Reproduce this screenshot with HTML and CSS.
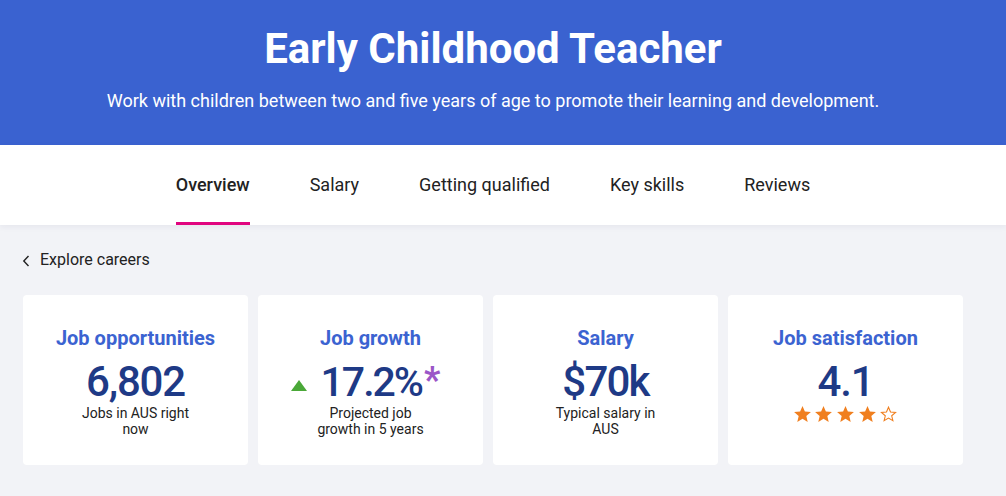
FILE: index.html
```html
<!DOCTYPE html>
<html lang="en">
<head>
<meta charset="utf-8">
<title>Early Childhood Teacher</title>
<link rel="stylesheet" href="styles.css">
</head>
<body>
<header class="hero">
  <h1 class="hero-title">Early Childhood Teacher</h1>
  <p class="hero-sub">Work with children between two and five years of age to promote their learning and development.</p>
</header>
<nav class="tabs">
  <a class="tab active">Overview</a>
  <a class="tab">Salary</a>
  <a class="tab">Getting qualified</a>
  <a class="tab">Key skills</a>
  <a class="tab">Reviews</a>
</nav>
<main class="content">
  <a class="back">
    <svg class="chev" width="8" height="12" viewBox="0 0 8 12"><path d="M6.5 1 L1.8 6 L6.5 11" fill="none" stroke="#222" stroke-width="1.4"/></svg>
    <span>Explore careers</span>
  </a>
  <section class="cards">
    <div class="card">
      <div class="card-title">Job opportunities</div>
      <div class="card-value">6,802</div>
      <div class="card-caption">Jobs in AUS right now</div>
    </div>
    <div class="card">
      <div class="card-title">Job growth</div>
      <div class="card-value card-value-growth"><svg class="tri" width="16" height="11" viewBox="0 0 16 11"><path d="M8 0 L16 11 L0 11 Z" fill="#4aa838"/></svg>17.2%<span class="ast">*</span></div>
      <div class="card-caption">Projected job growth in 5 years</div>
    </div>
    <div class="card">
      <div class="card-title">Salary</div>
      <div class="card-value card-value-salary">$70k</div>
      <div class="card-caption">Typical salary in AUS</div>
    </div>
    <div class="card">
      <div class="card-title">Job satisfaction</div>
      <div class="card-value">4.1</div>
      <div class="stars">
        <svg width="17" height="16" viewBox="2 2 20 19"><path d="M12 17.27L18.18 21l-1.64-7.03L22 9.24l-7.19-.61L12 2 9.19 8.63 2 9.24l5.46 4.73L5.82 21z" fill="#f07f1f"/></svg>
        <svg width="17" height="16" viewBox="2 2 20 19"><path d="M12 17.27L18.18 21l-1.64-7.03L22 9.24l-7.19-.61L12 2 9.19 8.63 2 9.24l5.46 4.73L5.82 21z" fill="#f07f1f"/></svg>
        <svg width="17" height="16" viewBox="2 2 20 19"><path d="M12 17.27L18.18 21l-1.64-7.03L22 9.24l-7.19-.61L12 2 9.19 8.63 2 9.24l5.46 4.73L5.82 21z" fill="#f07f1f"/></svg>
        <svg width="17" height="16" viewBox="2 2 20 19"><path d="M12 17.27L18.18 21l-1.64-7.03L22 9.24l-7.19-.61L12 2 9.19 8.63 2 9.24l5.46 4.73L5.82 21z" fill="#f07f1f"/></svg>
        <svg width="17" height="16" viewBox="2 2 20 19"><path d="M12 3.4L14.4 9.1 20.4 9.6 15.8 13.6 17.2 19.4 12 16.3 6.8 19.4 8.2 13.6 3.6 9.6 9.6 9.1Z" fill="none" stroke="#f07f1f" stroke-width="1.3" stroke-linejoin="miter"/></svg>
      </div>
    </div>
  </section>
</main>
</body>
</html>
```
FILE: styles.css
```css
* { box-sizing: border-box; }
html, body { margin: 0; padding: 0; }
body {
  font-family: Roboto, "Liberation Sans", Arial, sans-serif;
  background: #f2f3f7;
  color: #222;
  width: 1006px;
  height: 496px;
  overflow: hidden;
}
.hero {
  background: #3a62d0;
  color: #fff;
  height: 145px;
  padding: 25px 20px 0 0;
  text-align: center;
}
.hero-title {
  margin: 0;
  font-size: 42px;
  line-height: 48px;
  font-weight: 700;
}
.hero-sub {
  margin: 16px 0 0;
  font-size: 18px;
  line-height: 24px;
  font-weight: 400;
}
.tabs {
  background: #fff;
  height: 80px;
  display: flex;
  justify-content: center;
  gap: 60px;
  padding-right: 20px;
  box-shadow: 0 2px 6px rgba(30, 40, 80, 0.06);
  position: relative;
}
.tab {
  padding-top: 29px;
  font-size: 18px;
  line-height: 22px;
  color: #222;
  border-bottom: 3px solid transparent;
}
.tab.active {
  font-weight: 500;
  border-bottom-color: #e0047f;
}
.content {
  padding: 25px 0 0 22px;
}
.back {
  display: flex;
  align-items: center;
  gap: 10px;
  font-size: 16px;
  line-height: 20px;
  color: #222;
}
.chev { display: block; margin-top: 1px; }
.cards {
  margin-top: 25px;
  margin-left: 1px;
  display: grid;
  grid-template-columns: 225px 225px 225px 235px;
  gap: 10px;
}
.card {
  background: #fff;
  border-radius: 4px;
  height: 170px;
  padding-top: 31px;
  text-align: center;
}
.card-title {
  font-size: 20px;
  line-height: 24px;
  font-weight: 700;
  color: #3b63d1;
}
.card-value {
  margin-top: 10px;
  font-size: 42px;
  line-height: 44px;
  font-weight: 500;
  letter-spacing: -1.2px;
  color: #1e3a86;
  display: flex;
  justify-content: center;
  align-items: center;
}
.card-value-growth {
  font-size: 41px;
  letter-spacing: -2px;
  padding-right: 12px;
}
.card-value-salary { letter-spacing: -1.8px; }
.tri { margin: 6px 14px 0 0; }
.ast {
  color: #9b56c8;
  font-weight: 700;
  font-size: 36px;
  align-self: flex-start;
  line-height: 40px;
  margin-left: 2px;
}
.card-caption {
  margin: 1px auto 0;
  max-width: 112px;
  font-size: 14px;
  line-height: 16px;
  color: #222;
}
.stars {
  margin-top: 2px;
  display: flex;
  justify-content: center;
  gap: 4.7px;
}
.stars svg { display: block; }
```
